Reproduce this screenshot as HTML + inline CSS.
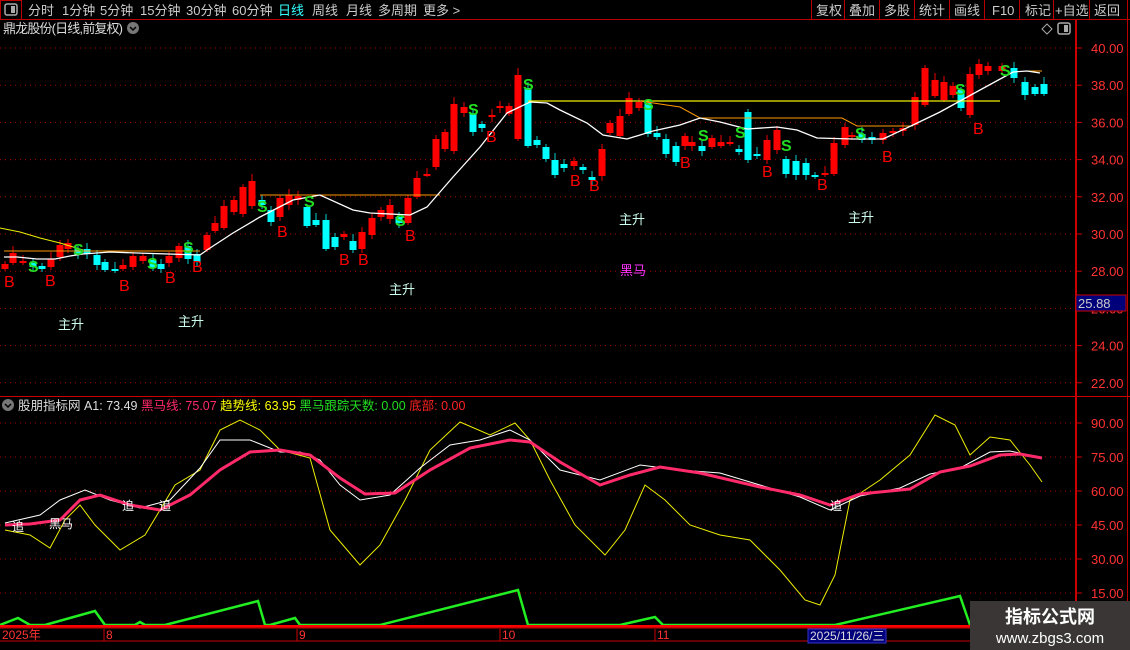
<!DOCTYPE html>
<html><head><meta charset="utf-8"><style>
body{margin:0;background:#000;width:1130px;height:650px;overflow:hidden;font-family:"Liberation Sans","Noto Sans CJK SC",sans-serif;}
svg{display:block}
</style></head><body>
<svg id="s" width="1130" height="650" xmlns="http://www.w3.org/2000/svg" font-family="Liberation Sans, Noto Sans CJK SC, sans-serif">
<rect width="1130" height="650" fill="#000"/>
<line x1="0" y1="19.5" x2="1130" y2="19.5" stroke="#b00" />
<rect x="0.5" y="0.5" width="21" height="19" fill="none" stroke="#b00"/>
<rect x="5" y="4" width="12" height="11" rx="2" fill="none" stroke="#aaa" stroke-width="1.5"/><rect x="11" y="6" width="4" height="7" fill="#aaa"/>
<g font-size="13" fill="#ccc">
<text x="28" y="15">分时</text><text x="62" y="15">1分钟</text><text x="100" y="15">5分钟</text><text x="140" y="15">15分钟</text><text x="186" y="15">30分钟</text><text x="232" y="15">60分钟</text>
<text x="278" y="15" fill="#3ff">日线</text><text x="312" y="15">周线</text><text x="346" y="15">月线</text><text x="378" y="15">多周期</text><text x="423" y="15">更多 &gt;</text>
<text x="816" y="15">复权</text><text x="849" y="15">叠加</text><text x="884" y="15">多股</text><text x="919" y="15">统计</text><text x="954" y="15">画线</text><text x="992" y="15">F10</text><text x="1025" y="15">标记</text><text x="1055" y="15">+自选</text><text x="1094" y="15">返回</text>
</g>
<g stroke="#b00"><line x1="811.5" y1="0" x2="811.5" y2="19"/><line x1="844.5" y1="0" x2="844.5" y2="19"/><line x1="879.5" y1="0" x2="879.5" y2="19"/><line x1="914.5" y1="0" x2="914.5" y2="19"/><line x1="949.5" y1="0" x2="949.5" y2="19"/><line x1="984.5" y1="0" x2="984.5" y2="19"/><line x1="1019.5" y1="0" x2="1019.5" y2="19"/><line x1="1053.5" y1="0" x2="1053.5" y2="19"/><line x1="1089.5" y1="0" x2="1089.5" y2="19"/><line x1="1127.5" y1="0" x2="1127.5" y2="650"/></g>
<text x="3" y="33" font-size="13" fill="#ddd" textLength="120">鼎龙股份(日线,前复权)</text>
<circle cx="133" cy="28" r="6" fill="#777"/><path d="M130 27l3 3 3-3" stroke="#000" fill="none" stroke-width="1.5"/>
<path d="M1047 24l5 5-5 5-5-5z" fill="none" stroke="#aaa"/>
<rect x="1058" y="23" width="12" height="11" rx="2" fill="none" stroke="#aaa" stroke-width="1.5"/><rect x="1064" y="25" width="4" height="7" fill="#aaa"/>
<line x1="1076" y1="20" x2="1076" y2="628" stroke="#c00" stroke-width="2"/>
<line x1="0" y1="396.5" x2="1130" y2="396.5" stroke="#c00"/>
<line x1="0" y1="627.5" x2="1076" y2="627.5" stroke="#c00" stroke-width="2"/>
<line x1="0" y1="641" x2="1076" y2="641" stroke="#c00"/>
<g id="grid"></g>
<g id="cand"></g>
<g id="lines" fill="none"></g>
<g id="txt" font-size="16"></g>
<circle cx="8" cy="405" r="6" fill="#777"/><path d="M5 404l3 3 3-3" stroke="#000" fill="none" stroke-width="1.5"/>
<text x="18" y="410" font-size="12.5"><tspan fill="#ddd">股朋指标网  A1: 73.49 </tspan><tspan fill="#ff2a6a">黑马线: 75.07 </tspan><tspan fill="#ff0">趋势线: 63.95 </tspan><tspan fill="#2d2">黑马跟踪天数: 0.00 </tspan><tspan fill="#f22">底部: 0.00</tspan></text>
<g font-size="12" fill="#f33"><text x="2" y="639">2025年</text><text x="106" y="639">8</text><text x="299" y="639">9</text><text x="502" y="639">10</text><text x="657" y="639">11</text></g>
<g stroke="#c00"><line x1="104" y1="629" x2="104" y2="641"/><line x1="297" y1="629" x2="297" y2="641"/><line x1="500" y1="629" x2="500" y2="641"/><line x1="655" y1="629" x2="655" y2="641"/></g>
<rect x="808" y="629" width="78" height="14" fill="#00007a" stroke="#33c"/><text x="810" y="640" font-size="12" fill="#ddd">2025/11/26/三</text>
<rect x="1076" y="295" width="50" height="16" fill="#00007a" stroke="#c00"/><text x="1078" y="308" font-size="13" fill="#ccc">25.88</text>
<rect x="970" y="601" width="160" height="49" fill="#3a3636"/>
<text x="1050" y="623" font-size="18" fill="#fff" text-anchor="middle" font-weight="bold">指标公式网</text>
<text x="1050" y="643" font-size="15" fill="#fff" text-anchor="middle">www.zbgs3.com</text>
</svg>
<script>
var NS="http://www.w3.org/2000/svg";
function el(p,t,a,txt){var e=document.createElementNS(NS,t);for(var k in a)e.setAttribute(k,a[k]);if(txt)e.textContent=txt;document.getElementById(p).appendChild(e);return e;}
for(var k=0;k<10;k++){var y=48+k*37.2;el("grid","line",{x1:0,y1:y,x2:1075,y2:y,stroke:"#a00","stroke-dasharray":"1 4"});
el("grid","text",{x:1091,y:y+5,"font-size":"13",fill:"#f33"},(40-2*k).toFixed(2));el("grid","line",{x1:1076,y1:y,x2:1082,y2:y,stroke:"#c00"});}
for(var k=0;k<6;k++){var y=423+k*34;el("grid","line",{x1:0,y1:y,x2:1075,y2:y,stroke:"#a00","stroke-dasharray":"1 4"});
el("grid","text",{x:1091,y:y+5,"font-size":"13",fill:"#f33"},(90-15*k).toFixed(2));el("grid","line",{x1:1076,y1:y,x2:1082,y2:y,stroke:"#c00"});}
var C=[[5,264,269,1],[13,253,263,1],[23,261,263,1],[33,263,267,0],[42,266,269,0],[51,259,267,1],[60,245,257,1],[68,243,249,1],[78,249,255,0],[87,249,254,0],[97,255,265,0],[105,262,270,0],[115,269,271,0],[123,265,269,1],[133,256,267,1],[143,256,261,1],[153,260,268,0],[161,264,269,0],[169,256,263,1],[179,246,258,1],[188,246,259,0],[197,254,262,0],[207,235,250,1],[215,223,231,1],[224,206,228,1],[234,200,212,1],[243,187,214,1],[252,181,206,1],[262,200,205,0],[271,210,222,0],[280,198,217,1],[289,195,205,1],[298,196,200,1],[307,207,226,0],[316,220,225,0],[326,220,249,0],[335,237,247,0],[344,234,237,1],[353,241,250,0],[362,232,249,1],[372,218,235,1],[381,210,217,1],[390,205,219,1],[399,217,223,0],[408,198,223,1],[417,178,197,1],[427,174,175,1],[436,139,167,1],[445,132,149,1],[454,104,151,1],[464,107,113,1],[473,114,132,0],[482,124,128,0],[492,115,117,1],[500,106,108,1],[509,106,114,1],[518,75,139,1],[528,88,146,0],[537,140,145,0],[546,147,159,0],[555,160,175,0],[564,164,168,0],[574,161,166,1],[583,167,170,0],[592,177,180,0],[602,149,176,1],[610,123,133,1],[620,116,136,1],[629,98,114,1],[639,102,108,1],[648,103,134,0],[657,133,137,0],[666,139,154,0],[676,146,162,0],[685,136,146,1],[692,142,146,1],[702,146,151,0],[712,138,147,1],[721,142,146,1],[730,142,144,1],[739,149,152,0],[748,112,160,0],[757,154,156,0],[767,140,160,1],[777,130,150,1],[786,159,174,0],[796,161,175,0],[806,163,175,0],[815,175,177,0],[825,173,175,1],[834,143,174,1],[845,127,145,1],[852,135,137,1],[862,134,140,0],[872,137,140,0],[883,133,140,1],[893,131,133,1],[903,128,131,1],[915,97,125,1],[925,68,105,1],[935,80,96,1],[944,82,100,1],[953,86,95,1],[961,90,108,0],[970,74,115,1],[979,64,75,1],[988,66,71,1],[1002,66,71,1],[1014,68,78,0],[1025,82,95,0],[1035,87,94,0],[1044,84,94,0]];
C.forEach(function(c,i){var col=c[3]?"#f00":"#0ff";var h=(i*37)%11;el("cand","line",{x1:c[0],y1:c[1]-3-(h%5),x2:c[0],y2:c[2]+2+(h%4),stroke:c[3]?"#e00":"#0cc"});
el("cand","rect",{x:c[0]-3.5,y:c[1],width:7,height:Math.max(2,c[2]-c[1]),fill:col});});
function pl(pts,col,w){el("lines","polyline",{points:pts,stroke:col,"stroke-width":w||1});}
pl("4,251 200,251","#f90");pl("0,228 20,232 40,238 60,243 83,250","#ee0");
pl("260,195 440,195","#f90");pl("528,101 880,101 1000,101","#ee0",1.2);pl("640,101 680,107 700,118 842,118 857,126 913,126","#f90");pl("1027,71 1042,71","#f90");
pl("4,257 17,257 37,259 55,259 70,256 83,254 110,252 137,253 200,255 207,250 233,233 260,217 293,200 320,195 353,210 370,213 410,215 427,207 453,177 480,147 507,113 530,102 547,103 560,110 587,123 603,135 627,139 653,131 680,125 700,118 720,122 747,129 777,127 797,130 817,138 853,139 883,139 913,125 940,112 980,90 1013,72 1027,71 1040,73","#fff",1.3);
pl("5,530 30,535 50,548 65,520 80,505 95,525 120,550 145,535 175,485 200,470 220,430 240,420 260,430 280,450 310,458 330,530 360,565 380,545 405,500 430,450 460,422 490,435 515,423 530,440 550,480 575,525 605,555 625,530 645,485 665,500 690,525 720,535 750,540 780,570 805,600 820,605 835,575 850,500 880,480 910,455 935,415 955,425 970,455 990,437 1010,440 1030,465 1042,482","#ee0");
pl("5,523 40,515 60,500 85,490 110,500 140,508 170,500 200,468 220,440 250,440 280,452 300,452 320,460 340,485 360,500 390,495 420,468 450,445 480,440 510,430 530,440 560,470 600,480 640,465 680,470 720,473 760,485 800,497 830,510 860,496 900,488 930,474 960,468 990,452 1010,451 1042,458","#fff");
pl("5,525 30,524 60,520 80,500 100,495 130,505 160,510 190,495 220,470 250,452 280,450 310,455 340,478 365,494 395,493 430,470 470,448 510,440 530,442 560,462 600,485 630,475 660,467 700,473 760,487 800,495 830,505 860,494 910,489 940,472 970,466 1000,455 1020,454 1042,458","#ff2a6a",3);
pl("0,625 18,618 30,625 45,625 95,611 105,625 135,625 140,622 145,625 165,625 258,601 265,625 270,625 295,618 300,625 380,625 518,590 528,625 620,625 655,617 663,625 835,625 960,596 970,625","#2e2",2.5);
el("lines","line",{x1:0,y1:626,x2:1075,y2:626,stroke:"#f00","stroke-width":2});
[[9,281],[50,280],[124,285],[170,277],[197,266],[282,231],[344,259],[363,259],[410,235],[491,136],[575,180],[594,185],[685,162],[767,171],[822,184],[887,156],[978,128]].forEach(function(p){el("txt","text",{x:p[0]-5,y:p[1]+6,fill:"#f00"},"B");});
[[33,266],[78,249],[152,263],[188,247],[262,206],[309,201],[400,220],[473,109],[528,84],[648,104],[703,135],[740,132],[786,145],[860,133],[960,89],[1005,70]].forEach(function(p){el("txt","text",{x:p[0]-5,y:p[1]+6,fill:"#2d2","font-weight":"bold"},"S");});
[[70,324],[190,321],[401,289],[631,219],[860,217]].forEach(function(p){el("txt","text",{x:p[0]-12,y:p[1]+5,fill:"#cfe","font-size":"13"},"主升");});
el("txt","text",{x:620,y:275,fill:"#f3f","font-size":"13"},"黑马");
[[18,526],[128,505],[165,505],[836,505]].forEach(function(p){el("txt","text",{x:p[0]-6,y:p[1]+5,fill:"#fff","font-size":"12"},"追");});
el("txt","text",{x:49,y:528,fill:"#fff","font-size":"12"},"黑马");
</script>
</body></html>
